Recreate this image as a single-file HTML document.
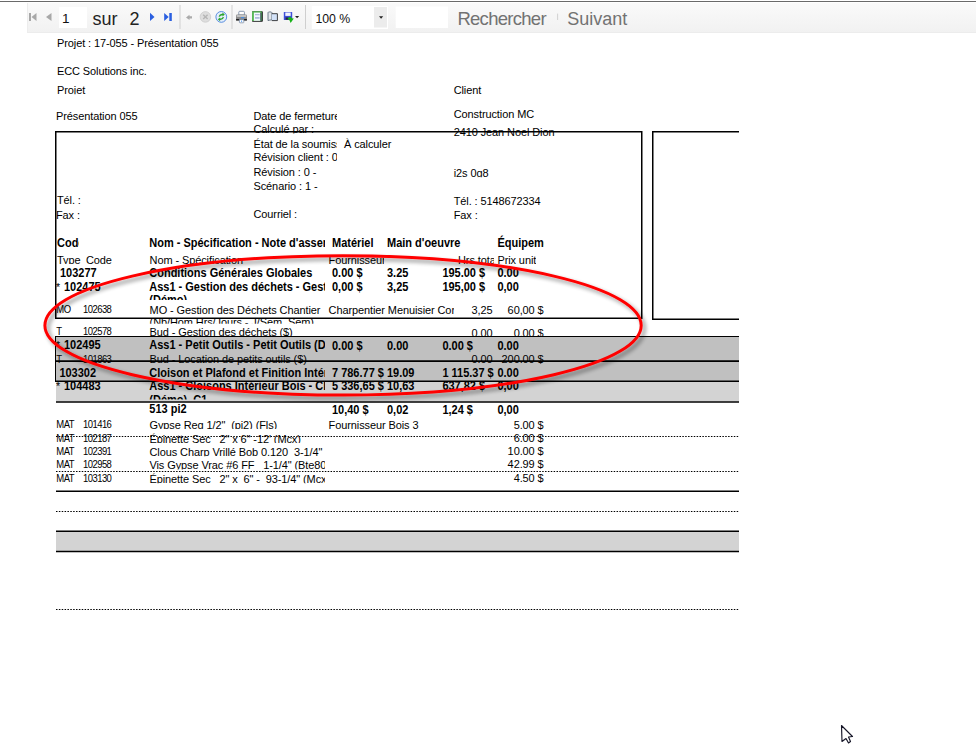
<!DOCTYPE html>
<html><head><meta charset="utf-8"><style>
html,body{margin:0;padding:0;background:#fff;width:976px;height:747px;overflow:hidden;position:relative;font-family:"Liberation Sans",sans-serif}
</style></head><body>
<svg id="doc" width="976" height="747" xml:space="preserve" style="position:absolute;left:0;top:0"><defs><clipPath id="cProj"><rect x="0" y="80" width="976" height="14.200000000000003"/></clipPath><clipPath id="cL1"><rect x="250" y="100" width="87" height="200"/></clipPath><clipPath id="cCalc"><rect x="250" y="120" width="87" height="13.5"/></clipPath><clipPath id="cZip"><rect x="0" y="160" width="976" height="17.30000000000001"/></clipPath><clipPath id="cCod"><rect x="0" y="230" width="79" height="20"/></clipPath><clipPath id="cNom"><rect x="0" y="0" width="325" height="747"/></clipPath><clipPath id="cEq"><rect x="0" y="230" width="544" height="20"/></clipPath><clipPath id="cHdr2"><rect x="0" y="250" width="976" height="14.100000000000023"/></clipPath><clipPath id="cFour"><rect x="0" y="250" width="384" height="15"/></clipPath><clipPath id="cHrs"><rect x="0" y="250" width="494" height="15"/></clipPath><clipPath id="cPrix"><rect x="0" y="250" width="536" height="15"/></clipPath><clipPath id="cDemo1"><rect x="0" y="280" width="325" height="20"/></clipPath><clipPath id="cChar"><rect x="0" y="300" width="454" height="30"/></clipPath><clipPath id="cNb"><rect x="0" y="319" width="976" height="4.699999999999989"/></clipPath><clipPath id="cDemo2"><rect x="0" y="392" width="325" height="7.600000000000023"/></clipPath><clipPath id="cM0"><rect x="0" y="416.6" width="325" height="12.399999999999977"/></clipPath><clipPath id="cM1"><rect x="0" y="430.5" width="325" height="12.399999999999977"/></clipPath><clipPath id="cM2"><rect x="0" y="443.8" width="325" height="12.399999999999977"/></clipPath><clipPath id="cM3"><rect x="0" y="457" width="325" height="12.399999999999977"/></clipPath><clipPath id="cM4"><rect x="0" y="470.9" width="325" height="12.399999999999977"/></clipPath><filter id="shadow" x="-10%" y="-30%" width="120%" height="160%"><feGaussianBlur in="SourceAlpha" stdDeviation="2"/><feOffset dx="3" dy="3" result="b"/><feComponentTransfer><feFuncA type="linear" slope="0.45"/></feComponentTransfer><feMerge><feMergeNode/><feMergeNode in="SourceGraphic"/></feMerge></filter></defs><g font-family="Liberation Sans, sans-serif" fill="#000" style="white-space:pre"><text x="57" y="47" font-size="11" letter-spacing="-0.1" transform="matrix(1,0,0,1.05,0,-2.35)">Projet&#160;:&#160;17-055&#160;-&#160;Présentation&#160;055</text><text x="57" y="75" font-size="11" letter-spacing="-0.1" transform="matrix(1,0,0,1.05,0,-3.75)">ECC&#160;Solutions&#160;inc.</text><g clip-path="url(#cProj)"><text x="57" y="94" font-size="11" letter-spacing="-0.1" transform="matrix(1,0,0,1.05,0,-4.7)">Projet</text></g><text x="56" y="120" font-size="11" letter-spacing="-0.1" transform="matrix(1,0,0,1.05,0,-6.0)">Présentation&#160;055</text><g clip-path="url(#cL1)"><text x="253.5" y="120" font-size="11" letter-spacing="-0.1" transform="matrix(1,0,0,1.05,0,-6.0)">Date&#160;de&#160;fermeture</text></g><g clip-path="url(#cCalc)"><text x="253.5" y="133" font-size="11" letter-spacing="-0.1" transform="matrix(1,0,0,1.05,0,-6.65)">Calculé&#160;par&#160;:</text></g><g clip-path="url(#cL1)"><text x="253.5" y="148" font-size="11" letter-spacing="-0.1" transform="matrix(1,0,0,1.05,0,-7.4)">État&#160;de&#160;la&#160;soumission</text></g><text x="344" y="148" font-size="11" letter-spacing="-0.1" transform="matrix(1,0,0,1.05,0,-7.4)">À&#160;calculer</text><g clip-path="url(#cL1)"><text x="253.5" y="161" font-size="11" letter-spacing="-0.1" transform="matrix(1,0,0,1.05,0,-8.05)">Révision&#160;client&#160;:&#160;0</text></g><text x="253.5" y="176" font-size="11" letter-spacing="-0.1" transform="matrix(1,0,0,1.05,0,-8.8)">Révision&#160;:&#160;0&#160;-</text><text x="253.5" y="190" font-size="11" letter-spacing="-0.1" transform="matrix(1,0,0,1.05,0,-9.5)">Scénario&#160;:&#160;1&#160;-</text><text x="253.5" y="218" font-size="11" letter-spacing="-0.1" transform="matrix(1,0,0,1.05,0,-10.9)">Courriel&#160;:</text><text x="453.7" y="94" font-size="11" letter-spacing="-0.1" transform="matrix(1,0,0,1.05,0,-4.7)">Client</text><text x="453.7" y="118" font-size="11" letter-spacing="-0.1" transform="matrix(1,0,0,1.05,0,-5.9)">Construction&#160;MC</text><text x="453.7" y="136" font-size="11" letter-spacing="-0.1" transform="matrix(1,0,0,1.05,0,-6.8)">2410&#160;Jean&#160;Noel&#160;Dion</text><g clip-path="url(#cZip)"><text x="453.7" y="177" font-size="11" letter-spacing="-0.1" transform="matrix(1,0,0,1.05,0,-8.85)">i2s&#160;0g8</text></g><text x="453.7" y="205" font-size="11" letter-spacing="-0.1" transform="matrix(1,0,0,1.05,0,-10.25)">Tél.&#160;:&#160;5148672334</text><text x="453.7" y="219" font-size="11" letter-spacing="-0.1" transform="matrix(1,0,0,1.05,0,-10.95)">Fax&#160;:</text><text x="57" y="204" font-size="11" letter-spacing="-0.1" transform="matrix(1,0,0,1.05,0,-10.2)">Tél.&#160;:</text><text x="56" y="219" font-size="11" letter-spacing="-0.1" transform="matrix(1,0,0,1.05,0,-10.95)">Fax&#160;:</text><rect x="55.75" y="131.75" width="586" height="186.5" fill="none" stroke="#000" stroke-width="1.5"/><path d="M652.75 320 V131.75 H739" fill="none" stroke="#000" stroke-width="1.5"/><path d="M652.75 319.25 H739" fill="none" stroke="#000" stroke-width="1.5"/><g clip-path="url(#cCod)"><text x="57" y="247" font-size="11" font-weight="bold" transform="matrix(1,0,0,1.1,0,-24.7)">Code</text></g><g clip-path="url(#cNom)"><text x="149.3" y="247" font-size="11" font-weight="bold" transform="matrix(1,0,0,1.1,0,-24.7)">Nom&#160;-&#160;Spécification&#160;-&#160;Note&#160;d&#x27;assemblage</text></g><text x="332" y="247" font-size="11" font-weight="bold" transform="matrix(1,0,0,1.1,0,-24.7)">Matériel</text><text x="387" y="247" font-size="11" font-weight="bold" transform="matrix(1,0,0,1.1,0,-24.7)">Main&#160;d&#x27;oeuvre</text><g clip-path="url(#cEq)"><text x="497.4" y="247" font-size="11" font-weight="bold" transform="matrix(1,0,0,1.1,0,-24.7)">Équipement</text></g><g clip-path="url(#cHdr2)"><text x="57" y="264" font-size="11" letter-spacing="-0.1" transform="matrix(1,0,0,1.05,0,-13.2)">Type</text></g><g clip-path="url(#cHdr2)"><text x="86" y="264" font-size="11" letter-spacing="-0.1" transform="matrix(1,0,0,1.05,0,-13.2)">Code</text></g><g clip-path="url(#cHdr2)"><text x="149.6" y="264" font-size="11" letter-spacing="-0.1" transform="matrix(1,0,0,1.05,0,-13.2)">Nom&#160;-&#160;Spécification</text></g><g clip-path="url(#cFour)"><text x="328.6" y="264" font-size="11" letter-spacing="-0.1" transform="matrix(1,0,0,1.05,0,-13.2)">Fournisseur</text></g><g clip-path="url(#cHrs)"><text x="458" y="264" font-size="11" letter-spacing="-0.1" transform="matrix(1,0,0,1.05,0,-13.2)">Hrs&#160;total</text></g><g clip-path="url(#cPrix)"><text x="497.4" y="264" font-size="11" letter-spacing="-0.1" transform="matrix(1,0,0,1.05,0,-13.2)">Prix&#160;unitaire</text></g><text x="60" y="277" font-size="11" font-weight="bold" transform="matrix(1,0,0,1.1,0,-27.7)">103277</text><text x="149.3" y="277" font-size="11" font-weight="bold" transform="matrix(1,0,0,1.1,0,-27.7)">Conditions&#160;Générales&#160;Globales</text><text x="332" y="277" font-size="11" font-weight="bold" transform="matrix(1,0,0,1.1,0,-27.7)">0.00&#160;$</text><text x="387" y="277" font-size="11" font-weight="bold" transform="matrix(1,0,0,1.1,0,-27.7)">3.25</text><text x="442.4" y="277" font-size="11" font-weight="bold" transform="matrix(1,0,0,1.1,0,-27.7)">195.00&#160;$</text><text x="497.4" y="277" font-size="11" font-weight="bold" transform="matrix(1,0,0,1.1,0,-27.7)">0.00</text><text x="56" y="291" font-size="10.5">*</text><text x="64" y="291" font-size="11" font-weight="bold" transform="matrix(1,0,0,1.1,0,-29.1)">102475</text><g clip-path="url(#cNom)"><text x="149.3" y="291" font-size="11" font-weight="bold" transform="matrix(1,0,0,1.1,0,-29.1)">Ass1&#160;-&#160;Gestion&#160;des&#160;déchets&#160;-&#160;Gestion</text></g><g clip-path="url(#cDemo1)"><text x="149.3" y="304" font-size="11" font-weight="bold" transform="matrix(1,0,0,1.1,0,-30.4)">(Démo)</text></g><text x="332" y="291" font-size="11" font-weight="bold" transform="matrix(1,0,0,1.1,0,-29.1)">0,00&#160;$</text><text x="387" y="291" font-size="11" font-weight="bold" transform="matrix(1,0,0,1.1,0,-29.1)">3,25</text><text x="442.4" y="291" font-size="11" font-weight="bold" transform="matrix(1,0,0,1.1,0,-29.1)">195,00&#160;$</text><text x="497.4" y="291" font-size="11" font-weight="bold" transform="matrix(1,0,0,1.1,0,-29.1)">0,00</text><text x="56.3" y="313" font-size="9.5" letter-spacing="-0.55" transform="matrix(1,0,0,1.15,0,-46.95)">MO</text><text x="83" y="313" font-size="9.5" letter-spacing="-0.55" transform="matrix(1,0,0,1.15,0,-46.95)">102638</text><text x="149.6" y="314" font-size="11" letter-spacing="-0.1" transform="matrix(1,0,0,1.05,0,-15.7)">MO&#160;-&#160;Gestion&#160;des&#160;Déchets&#160;Chantier</text><g clip-path="url(#cChar)"><text x="328.6" y="314" font-size="11" letter-spacing="-0.1" transform="matrix(1,0,0,1.05,0,-15.7)">Charpentier&#160;Menuisier&#160;Compagnon</text></g><text x="492.5" y="314" font-size="11" text-anchor="end" letter-spacing="-0.1" transform="matrix(1,0,0,1.05,0,-15.7)">3,25</text><text x="543.6" y="314" font-size="11" text-anchor="end" letter-spacing="-0.1" transform="matrix(1,0,0,1.05,0,-15.7)">60,00&#160;$</text><g clip-path="url(#cNb)"><text x="149.6" y="326" font-size="11" letter-spacing="-0.1" transform="matrix(1,0,0,1.05,0,-16.3)">(Nb/Hom&#160;Hrs/Jours&#160;-&#160;J/Sem&#160;&#160;Sem)</text></g><text x="56.3" y="335" font-size="9.5" letter-spacing="-0.55" transform="matrix(1,0,0,1.15,0,-50.25)">T</text><text x="83" y="335" font-size="9.5" letter-spacing="-0.55" transform="matrix(1,0,0,1.15,0,-50.25)">102578</text><text x="149.6" y="336" font-size="11" letter-spacing="-0.1" transform="matrix(1,0,0,1.05,0,-16.8)">Bud&#160;-&#160;Gestion&#160;des&#160;déchets&#160;($)</text><text x="492.5" y="337" font-size="11" text-anchor="end" letter-spacing="-0.1" transform="matrix(1,0,0,1.05,0,-16.85)">0.00</text><text x="543.6" y="337" font-size="11" text-anchor="end" letter-spacing="-0.1" transform="matrix(1,0,0,1.05,0,-16.85)">0.00&#160;$</text><rect x="55" y="336" width="684" height="25" fill="#c0c0c0"/><rect x="55" y="361" width="684" height="20.5" fill="#c0c0c0"/><rect x="56" y="381.5" width="683" height="20" fill="#d3d3d3"/><line x1="55" y1="336.5" x2="739" y2="336.5" stroke="#000" stroke-width="1"/><line x1="55.5" y1="336" x2="55.5" y2="381.5" stroke="#000" stroke-width="1"/><line x1="55" y1="361.25" x2="739" y2="361.25" stroke="#000" stroke-width="1.5"/><line x1="55" y1="381.25" x2="739" y2="381.25" stroke="#000" stroke-width="1.5"/><line x1="56" y1="402" x2="739" y2="402" stroke="#000" stroke-width="1.5"/><text x="56" y="349" font-size="10.5">*</text><text x="64" y="349" font-size="11" font-weight="bold" transform="matrix(1,0,0,1.1,0,-34.9)">102495</text><g clip-path="url(#cNom)"><text x="149.3" y="349" font-size="11" font-weight="bold" transform="matrix(1,0,0,1.1,0,-34.9)">Ass1&#160;-&#160;Petit&#160;Outils&#160;-&#160;Petit&#160;Outils&#160;(Démo)</text></g><text x="332" y="350" font-size="11" font-weight="bold" transform="matrix(1,0,0,1.1,0,-35.0)">0.00&#160;$</text><text x="387" y="350" font-size="11" font-weight="bold" transform="matrix(1,0,0,1.1,0,-35.0)">0.00</text><text x="442.4" y="350" font-size="11" font-weight="bold" transform="matrix(1,0,0,1.1,0,-35.0)">0.00&#160;$</text><text x="497.4" y="350" font-size="11" font-weight="bold" transform="matrix(1,0,0,1.1,0,-35.0)">0.00</text><text x="56.3" y="363" font-size="9.5" letter-spacing="-0.55" transform="matrix(1,0,0,1.15,0,-54.45)">T</text><text x="83" y="363" font-size="9.5" letter-spacing="-0.55" transform="matrix(1,0,0,1.15,0,-54.45)">101863</text><text x="149.6" y="363" font-size="11" letter-spacing="-0.1" transform="matrix(1,0,0,1.05,0,-18.15)">Bud&#160;-&#160;Location&#160;de&#160;petits&#160;outils&#160;($)</text><text x="492.5" y="363" font-size="11" text-anchor="end" letter-spacing="-0.1" transform="matrix(1,0,0,1.05,0,-18.15)">0.00</text><text x="543.6" y="363" font-size="11" text-anchor="end" letter-spacing="-0.1" transform="matrix(1,0,0,1.05,0,-18.15)">200.00&#160;$</text><line x1="55" y1="361.25" x2="739" y2="361.25" stroke="#000" stroke-width="1.5"/><text x="59.4" y="377" font-size="11" font-weight="bold" transform="matrix(1,0,0,1.1,0,-37.7)">103302</text><g clip-path="url(#cNom)"><text x="149.3" y="377" font-size="11" font-weight="bold" transform="matrix(1,0,0,1.1,0,-37.7)">Cloison&#160;et&#160;Plafond&#160;et&#160;Finition&#160;Intérieure</text></g><text x="332" y="377" font-size="11" font-weight="bold" transform="matrix(1,0,0,1.1,0,-37.7)">7&#160;786.77&#160;$</text><text x="387" y="377" font-size="11" font-weight="bold" transform="matrix(1,0,0,1.1,0,-37.7)">19.09</text><text x="442.4" y="377" font-size="11" font-weight="bold" transform="matrix(1,0,0,1.1,0,-37.7)">1&#160;115.37&#160;$</text><text x="497.4" y="377" font-size="11" font-weight="bold" transform="matrix(1,0,0,1.1,0,-37.7)">0.00</text><text x="56" y="390" font-size="10.5">*</text><text x="64" y="390" font-size="11" font-weight="bold" transform="matrix(1,0,0,1.1,0,-39.0)">104483</text><g clip-path="url(#cNom)"><text x="149.3" y="390" font-size="11" font-weight="bold" transform="matrix(1,0,0,1.1,0,-39.0)">Ass1&#160;-&#160;Cloisons&#160;Intérieur&#160;Bois&#160;-&#160;Cloisons</text></g><g clip-path="url(#cDemo2)"><text x="149.3" y="404" font-size="11" font-weight="bold" transform="matrix(1,0,0,1.1,0,-40.4)">(Démo)&#160;&#160;C1</text></g><text x="332" y="390" font-size="11" font-weight="bold" transform="matrix(1,0,0,1.1,0,-39.0)">5&#160;336,65&#160;$</text><text x="387" y="390" font-size="11" font-weight="bold" transform="matrix(1,0,0,1.1,0,-39.0)">10,63</text><text x="442.4" y="390" font-size="11" font-weight="bold" transform="matrix(1,0,0,1.1,0,-39.0)">637,82&#160;$</text><text x="497.4" y="390" font-size="11" font-weight="bold" transform="matrix(1,0,0,1.1,0,-39.0)">0,00</text><text x="149.3" y="413" font-size="11" font-weight="bold" transform="matrix(1,0,0,1.1,0,-41.3)">513&#160;pi2</text><text x="332" y="414" font-size="11" font-weight="bold" transform="matrix(1,0,0,1.1,0,-41.4)">10,40&#160;$</text><text x="387" y="414" font-size="11" font-weight="bold" transform="matrix(1,0,0,1.1,0,-41.4)">0,02</text><text x="442.4" y="414" font-size="11" font-weight="bold" transform="matrix(1,0,0,1.1,0,-41.4)">1,24&#160;$</text><text x="497.4" y="414" font-size="11" font-weight="bold" transform="matrix(1,0,0,1.1,0,-41.4)">0,00</text><text x="56.3" y="428" font-size="9.5" letter-spacing="-0.55" transform="matrix(1,0,0,1.15,0,-64.2)">MAT</text><text x="83" y="428" font-size="9.5" letter-spacing="-0.55" transform="matrix(1,0,0,1.15,0,-64.2)">101416</text><g clip-path="url(#cM0)"><text x="149.5" y="429" font-size="11" letter-spacing="-0.1" transform="matrix(1,0,0,1.05,0,-21.45)">Gypse&#160;Reg&#160;1/2&quot;&#160;&#160;(pi2)&#160;(Fls)</text></g><text x="328.6" y="429" font-size="11" letter-spacing="-0.1" transform="matrix(1,0,0,1.05,0,-21.45)">Fournisseur&#160;Bois&#160;3</text><text x="543.6" y="429" font-size="11" text-anchor="end" letter-spacing="-0.1" transform="matrix(1,0,0,1.05,0,-21.45)">5.00&#160;$</text><text x="56.3" y="442" font-size="9.5" letter-spacing="-0.55" transform="matrix(1,0,0,1.15,0,-66.3)">MAT</text><text x="83" y="442" font-size="9.5" letter-spacing="-0.55" transform="matrix(1,0,0,1.15,0,-66.3)">102187</text><g clip-path="url(#cM1)"><text x="149.5" y="443" font-size="11" letter-spacing="-0.1" transform="matrix(1,0,0,1.05,0,-22.15)">Épinette&#160;Sec&#160;&#160;&#160;2&quot;&#160;x&#160;6&quot;&#160;-12&#x27;&#160;(Mcx)</text></g><text x="543.6" y="442" font-size="11" text-anchor="end" letter-spacing="-0.1" transform="matrix(1,0,0,1.05,0,-22.1)">6.00&#160;$</text><text x="56.3" y="455" font-size="9.5" letter-spacing="-0.55" transform="matrix(1,0,0,1.15,0,-68.25)">MAT</text><text x="83" y="455" font-size="9.5" letter-spacing="-0.55" transform="matrix(1,0,0,1.15,0,-68.25)">102391</text><g clip-path="url(#cM2)"><text x="149.5" y="456" font-size="11" letter-spacing="-0.1" transform="matrix(1,0,0,1.05,0,-22.8)">Clous&#160;Charp&#160;Vrillé&#160;Bob&#160;0.120&#160;&#160;3-1/4&quot;</text></g><text x="543.6" y="455" font-size="11" text-anchor="end" letter-spacing="-0.1" transform="matrix(1,0,0,1.05,0,-22.75)">10.00&#160;$</text><text x="56.3" y="468" font-size="9.5" letter-spacing="-0.55" transform="matrix(1,0,0,1.15,0,-70.2)">MAT</text><text x="83" y="468" font-size="9.5" letter-spacing="-0.55" transform="matrix(1,0,0,1.15,0,-70.2)">102958</text><g clip-path="url(#cM3)"><text x="149.5" y="469" font-size="11" letter-spacing="-0.1" transform="matrix(1,0,0,1.05,0,-23.45)">Vis&#160;Gypse&#160;Vrac&#160;#6&#160;FF&#160;&#160;&#160;1-1/4&quot;&#160;(Bte8000)</text></g><text x="543.6" y="468" font-size="11" text-anchor="end" letter-spacing="-0.1" transform="matrix(1,0,0,1.05,0,-23.4)">42.99&#160;$</text><text x="56.3" y="482" font-size="9.5" letter-spacing="-0.55" transform="matrix(1,0,0,1.15,0,-72.3)">MAT</text><text x="83" y="482" font-size="9.5" letter-spacing="-0.55" transform="matrix(1,0,0,1.15,0,-72.3)">103130</text><g clip-path="url(#cM4)"><text x="149.5" y="483" font-size="11" letter-spacing="-0.1" transform="matrix(1,0,0,1.05,0,-24.15)">Épinette&#160;Sec&#160;&#160;&#160;2&quot;&#160;x&#160;&#160;6&quot;&#160;-&#160;&#160;93-1/4&quot;&#160;(Mcx)</text></g><text x="543.6" y="482" font-size="11" text-anchor="end" letter-spacing="-0.1" transform="matrix(1,0,0,1.05,0,-24.1)">4.50&#160;$</text><line x1="56" y1="436.5" x2="739" y2="436.5" stroke="#000" stroke-width="1" stroke-dasharray="1.5 1.36"/><line x1="56" y1="471.5" x2="739" y2="471.5" stroke="#000" stroke-width="1" stroke-dasharray="1.5 1.36"/><line x1="56" y1="491.25" x2="739" y2="491.25" stroke="#000" stroke-width="1.5"/><line x1="56" y1="511.5" x2="739" y2="511.5" stroke="#000" stroke-width="1" stroke-dasharray="1.5 1.36"/><rect x="56" y="531" width="683" height="20.5" fill="#d3d3d3"/><line x1="56" y1="531.25" x2="739" y2="531.25" stroke="#000" stroke-width="1.5"/><line x1="56" y1="551.5" x2="739" y2="551.5" stroke="#000" stroke-width="1.5"/><line x1="56" y1="609.5" x2="739" y2="609.5" stroke="#000" stroke-width="1" stroke-dasharray="1.5 1.36"/></g><g filter="url(#shadow)"><ellipse cx="343.05" cy="325.4" rx="298.15" ry="69.7" fill="none" stroke="#ff0000" stroke-width="3"/></g></svg>
<div style="position:absolute;left:0;top:0;width:976px;height:1px;"></div>
<svg width="976" height="34" style="position:absolute;left:0;top:0">
<defs>
<linearGradient id="tbg" x1="0" y1="0" x2="0" y2="1"><stop offset="0" stop-color="#fafafa"/><stop offset="1" stop-color="#f1f1f1"/></linearGradient>
</defs>
<rect x="0" y="1" width="976" height="1" fill="#6a6a6a"/>
<rect x="27" y="3" width="949" height="30" fill="url(#tbg)"/>
<rect x="27" y="3" width="1" height="30" fill="#ededed"/>
<rect x="27" y="32" width="949" height="1" fill="#ececec"/>
<!-- first -->
<rect x="29" y="13" width="2" height="8" fill="#a8a8a8"/>
<path d="M36.5 13 V21 L31.5 17 Z" fill="#a8a8a8"/>
<path d="M51.5 13 V21 L46 17 Z" fill="#a8a8a8"/>
<rect x="59" y="7" width="28" height="21" fill="#fff"/>
<text x="62" y="23" font-family="Liberation Sans" font-size="13.5" fill="#111">1</text>
<text x="92.5" y="24.6" font-family="Liberation Sans" font-size="18" fill="#222">sur</text>
<text x="129.5" y="24.8" font-family="Liberation Sans" font-size="18" fill="#222">2</text>
<path d="M150 12.7 V21 L154.5 16.9 Z" fill="#2a5fe0"/>
<path d="M164.2 13 V21 L168.7 17 Z" fill="#2a5fe0"/>
<rect x="169.3" y="13" width="2.5" height="8" fill="#2a5fe0"/>
<rect x="179.5" y="5" width="1" height="24" fill="#cfcfcf"/>
<path d="M186 17.4 L189.5 14.8 V16.2 H192 V18.6 H189.5 V20 Z" fill="#ababab"/>
<circle cx="205.4" cy="16.9" r="5.3" fill="#dedede" stroke="#cccccc" stroke-width="0.8"/>
<path d="M203.2 14.8 L207.6 19 M207.6 14.8 L203.2 19" stroke="#b5b5b5" stroke-width="1.4"/>
<circle cx="221.3" cy="16.9" r="5.4" fill="#e4eefc" stroke="#5a8fe0" stroke-width="1"/>
<path d="M218.5 16.5 Q219.5 13.5 222.5 13.8 L222.5 12.6 L224.8 14.6 L222.5 16.4 L222.5 15.3 Q220.5 15.3 219.8 16.8 Z" fill="#2da52d"/>
<path d="M224.1 17.3 Q223.1 20.3 220.1 20 L220.1 21.2 L217.8 19.2 L220.1 17.4 L220.1 18.5 Q222.1 18.5 222.8 17 Z" fill="#2da52d"/>
<rect x="231.5" y="5" width="1" height="24" fill="#cfcfcf"/>
<!-- printer -->
<path d="M238.8 15 V12.2 Q238.8 11.3 239.8 11.3 H243.4 Q244.4 11.3 244.4 12.2 V15 Z" fill="#fff" stroke="#7d8fa8" stroke-width="0.9"/>
<rect x="236" y="14.6" width="11" height="6" rx="1.2" fill="#8c8c8c"/>
<rect x="236.8" y="15.2" width="9.4" height="1.6" fill="#d0d0d0"/>
<rect x="236" y="19" width="11" height="1.6" rx="0.6" fill="#1e1e1e"/>
<rect x="241" y="17.2" width="3.2" height="1" fill="#3d8ff2"/>
<path d="M239.4 19.6 H243.8 V22.2 Q243.8 22.8 243.2 22.8 H240 Q239.4 22.8 239.4 22.2 Z" fill="#fff" stroke="#7d8fa8" stroke-width="0.8"/>
<circle cx="241.6" cy="21.2" r="0.6" fill="#3d8ff2"/>
<!-- page -->
<rect x="252" y="11.2" width="10.8" height="10.6" rx="0.8" fill="#151515"/>
<rect x="252" y="11.2" width="9.8" height="9.8" rx="0.8" fill="#58b858"/>
<rect x="253.9" y="12.6" width="6.7" height="8.2" fill="#f4f6ff"/>
<rect x="260.4" y="12.6" width="0.9" height="8.2" fill="#2a3550"/>
<rect x="255" y="14.3" width="4.6" height="0.9" fill="#8fa3c8"/>
<rect x="255" y="17" width="4.6" height="1.8" fill="#aebcdc"/>
<!-- book -->
<path d="M268 20.6 V12.6 Q268 11.9 269.8 11.9 Q271.9 11.9 271.9 12.6 V20 Q270 19.7 268 20.6 Z" fill="#e2e6ea" stroke="#4f6072" stroke-width="0.8"/>
<path d="M271.9 13.7 H277.4 V20.6 H271.9" fill="#d3e2f8" stroke="#151515" stroke-width="0.8"/>
<!-- save -->
<rect x="283.8" y="12.1" width="8.4" height="7.8" rx="0.5" fill="#3f4fd8"/>
<rect x="285.3" y="12.5" width="5.4" height="3.4" fill="#f2f3ff"/>
<rect x="285.6" y="17.4" width="3" height="2.3" fill="#2a2a3a"/>
<path d="M287.6 18.6 L290.2 16.6 L291.6 18.3 L293.8 18.6 L290.6 22.9 L289.6 20.6 Z" fill="#17b217"/>
<path d="M295 16 H299.2 L297.1 18.2 Z" fill="#222"/>
<rect x="305" y="5" width="1" height="24" fill="#cfcfcf"/>
<!-- zoom -->
<rect x="311.8" y="6" width="76.2" height="23" fill="#fff"/>
<rect x="374" y="7" width="13" height="20.5" fill="#ececec"/>
<path d="M379 16.3 H383.2 L381.1 18.8 Z" fill="#222"/>
<text x="315.4" y="22.5" font-family="Liberation Sans" font-size="12.3" fill="#111">100 %</text>
<rect x="395.7" y="6.5" width="52.3" height="21.5" fill="#fff"/>
<text x="457.4" y="25" font-family="Liberation Sans" font-size="18.5" fill="#727272" letter-spacing="-0.72">Rechercher</text>
<rect x="557.3" y="13.6" width="0.8" height="6.4" fill="#c8c8c8"/>
<text x="567.3" y="25" font-family="Liberation Sans" font-size="18" fill="#727272">Suivant</text>
</svg>
<svg width="20" height="25" style="position:absolute;left:836px;top:721px">
<path d="M5.5 4.5 L16.5 15.5 L12.5 16 L14.5 20.5 L12.5 22 L10 17.5 L6 20.5 Z" fill="#fff" stroke="#161628" stroke-width="1.15" stroke-linejoin="round"/>
</svg>

</body></html>
